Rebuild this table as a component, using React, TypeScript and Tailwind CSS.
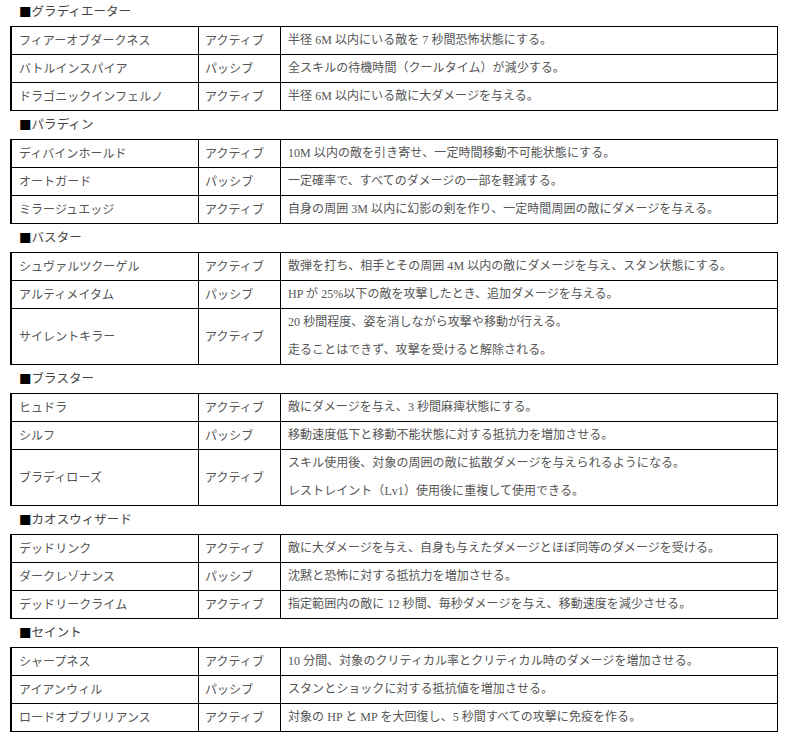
type Skill = { name: string; kind: string; desc: string[] };
type Section = { title: string; skills: Skill[] };

const sections: Section[] = [
  {
    title: "グラディエーター",
    skills: [
      { name: "フィアーオブダークネス", kind: "アクティブ", desc: ["半径 6M 以内にいる敵を 7 秒間恐怖状態にする。"] },
      { name: "バトルインスパイア", kind: "パッシブ", desc: ["全スキルの待機時間（クールタイム）が減少する。"] },
      { name: "ドラゴニックインフェルノ", kind: "アクティブ", desc: ["半径 6M 以内にいる敵に大ダメージを与える。"] },
    ],
  },
  {
    title: "パラディン",
    skills: [
      { name: "ディバインホールド", kind: "アクティブ", desc: ["10M 以内の敵を引き寄せ、一定時間移動不可能状態にする。"] },
      { name: "オートガード", kind: "パッシブ", desc: ["一定確率で、すべてのダメージの一部を軽減する。"] },
      { name: "ミラージュエッジ", kind: "アクティブ", desc: ["自身の周囲 3M 以内に幻影の剣を作り、一定時間周囲の敵にダメージを与える。"] },
    ],
  },
  {
    title: "バスター",
    skills: [
      { name: "シュヴァルツクーゲル", kind: "アクティブ", desc: ["散弾を打ち、相手とその周囲 4M 以内の敵にダメージを与え、スタン状態にする。"] },
      { name: "アルティメイタム", kind: "パッシブ", desc: ["HP が 25%以下の敵を攻撃したとき、追加ダメージを与える。"] },
      {
        name: "サイレントキラー",
        kind: "アクティブ",
        desc: ["20 秒間程度、姿を消しながら攻撃や移動が行える。", "走ることはできず、攻撃を受けると解除される。"],
      },
    ],
  },
  {
    title: "ブラスター",
    skills: [
      { name: "ヒュドラ", kind: "アクティブ", desc: ["敵にダメージを与え、3 秒間麻痺状態にする。"] },
      { name: "シルフ", kind: "パッシブ", desc: ["移動速度低下と移動不能状態に対する抵抗力を増加させる。"] },
      {
        name: "ブラディローズ",
        kind: "アクティブ",
        desc: ["スキル使用後、対象の周囲の敵に拡散ダメージを与えられるようになる。", "レストレイント（Lv1）使用後に重複して使用できる。"],
      },
    ],
  },
  {
    title: "カオスウィザード",
    skills: [
      { name: "デッドリンク", kind: "アクティブ", desc: ["敵に大ダメージを与え、自身も与えたダメージとほぼ同等のダメージを受ける。"] },
      { name: "ダークレゾナンス", kind: "パッシブ", desc: ["沈黙と恐怖に対する抵抗力を増加させる。"] },
      { name: "デッドリークライム", kind: "アクティブ", desc: ["指定範囲内の敵に 12 秒間、毎秒ダメージを与え、移動速度を減少させる。"] },
    ],
  },
  {
    title: "セイント",
    skills: [
      { name: "シャープネス", kind: "アクティブ", desc: ["10 分間、対象のクリティカル率とクリティカル時のダメージを増加させる。"] },
      { name: "アイアンウィル", kind: "パッシブ", desc: ["スタンとショックに対する抵抗値を増加させる。"] },
      { name: "ロードオブブリリアンス", kind: "アクティブ", desc: ["対象の HP と MP を大回復し、5 秒間すべての攻撃に免疫を作る。"] },
    ],
  },
];

export default function App() {
  return (
    <div
      className="min-h-screen w-[789px] bg-white px-[10px] -mt-[2px] text-[12px] tracking-[0.05px]"
      style={{ fontFamily: '"Liberation Serif", "Noto Sans CJK JP", serif' }}
    >
      {sections.map((s) => (
        <section key={s.title}>
          <h2 className="flex h-[28px] items-center pl-[9px] text-[12.5px] font-normal text-[#444]">
            <span className="text-black" style={{ fontFamily: '"Noto Sans CJK JP", sans-serif' }}>
              ■
            </span>
            {s.title}
          </h2>
          <div className="w-[768px] border-t border-l-2 border-r border-black">
            {s.skills.map((k) => (
              <div
                key={k.name}
                className="grid grid-cols-[187px_82px_1fr] border-b border-black text-[#555]"
              >
                <div className="flex items-center border-r border-black pl-[7px]">{k.name}</div>
                <div className="flex items-center border-r border-black pl-[6px]">{k.kind}</div>
                <div className="pl-[7px]">
                  {k.desc.map((d) => (
                    <p key={d} className="leading-[27px] h-[27px] [&+p]:h-[28px] [&+p]:leading-[28px]">
                      {d}
                    </p>
                  ))}
                </div>
              </div>
            ))}
          </div>
        </section>
      ))}
    </div>
  );
}
